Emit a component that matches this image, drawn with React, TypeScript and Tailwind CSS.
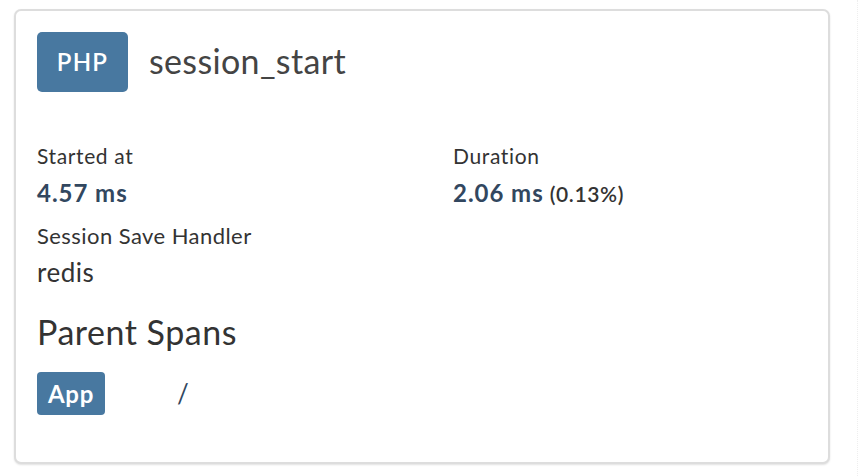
export default function App() {
  return (
    <div
      className="w-[860px] h-[476px] bg-white"
      style={{ fontFamily: '"Lato", "Liberation Sans", sans-serif' }}
    >
      <div className="w-[858px] h-[476px] border-r border-dotted border-[#eeeeee] pt-[9px] pl-[14px]">
        <div className="w-[816px] h-[455px] rounded-[7px] border-2 border-[#dddddd] bg-white shadow-[0_1px_2px_rgba(0,0,0,0.12)] px-[21px] pt-[21px]">
          {/* header */}
          <div className="flex items-center gap-[21px]">
            <span className="flex items-center justify-center w-[91px] h-[60px] rounded-[5px] bg-[#4878a0] text-white text-[24px] font-semibold tracking-[0.05em]">
              PHP
            </span>
            <h1 className="text-[34px] text-[#444444] leading-none tracking-[0.01em] pb-[2px]">session_start</h1>
          </div>

          {/* details */}
          <div className="grid grid-cols-[416px_1fr] mt-[46px] text-[#333333]">
            <div>
              <div className="text-[21px] leading-[36px] tracking-[0.03em]">Started at</div>
              <div className="text-[24px] leading-[38px] font-bold text-[#32475f] tracking-[0.04em]">4.57 ms</div>
              <div className="text-[22px] leading-[36px] mt-[6px] tracking-[0.02em]">Session Save Handler</div>
              <div className="text-[26px] leading-[36px] tracking-[0.02em]">redis</div>
            </div>
            <div>
              <div className="text-[21px] leading-[36px] tracking-[0.03em]">Duration</div>
              <div className="leading-[38px] text-[#32475f]">
                <span className="text-[24px] font-bold tracking-[0.04em]">2.06 ms</span>
                <span className="ml-[6px] text-[21px] font-semibold text-[#333333] tracking-[0.03em]">(0.13%)</span>
              </div>
            </div>
          </div>

          <h2 className="text-[34px] leading-[44px] text-[#333333] mt-[20px] tracking-[0.015em]">Parent Spans</h2>

          <div className="flex items-center mt-[18px]">
            <span className="flex items-center justify-center w-[68px] h-[43px] rounded-[4px] bg-[#4878a0] text-white text-[24px] font-bold tracking-[0.03em]">
              App
            </span>
            <span className="ml-[72px] text-[26px] text-[#32475f]">/</span>
          </div>
        </div>
      </div>
    </div>
  );
}
